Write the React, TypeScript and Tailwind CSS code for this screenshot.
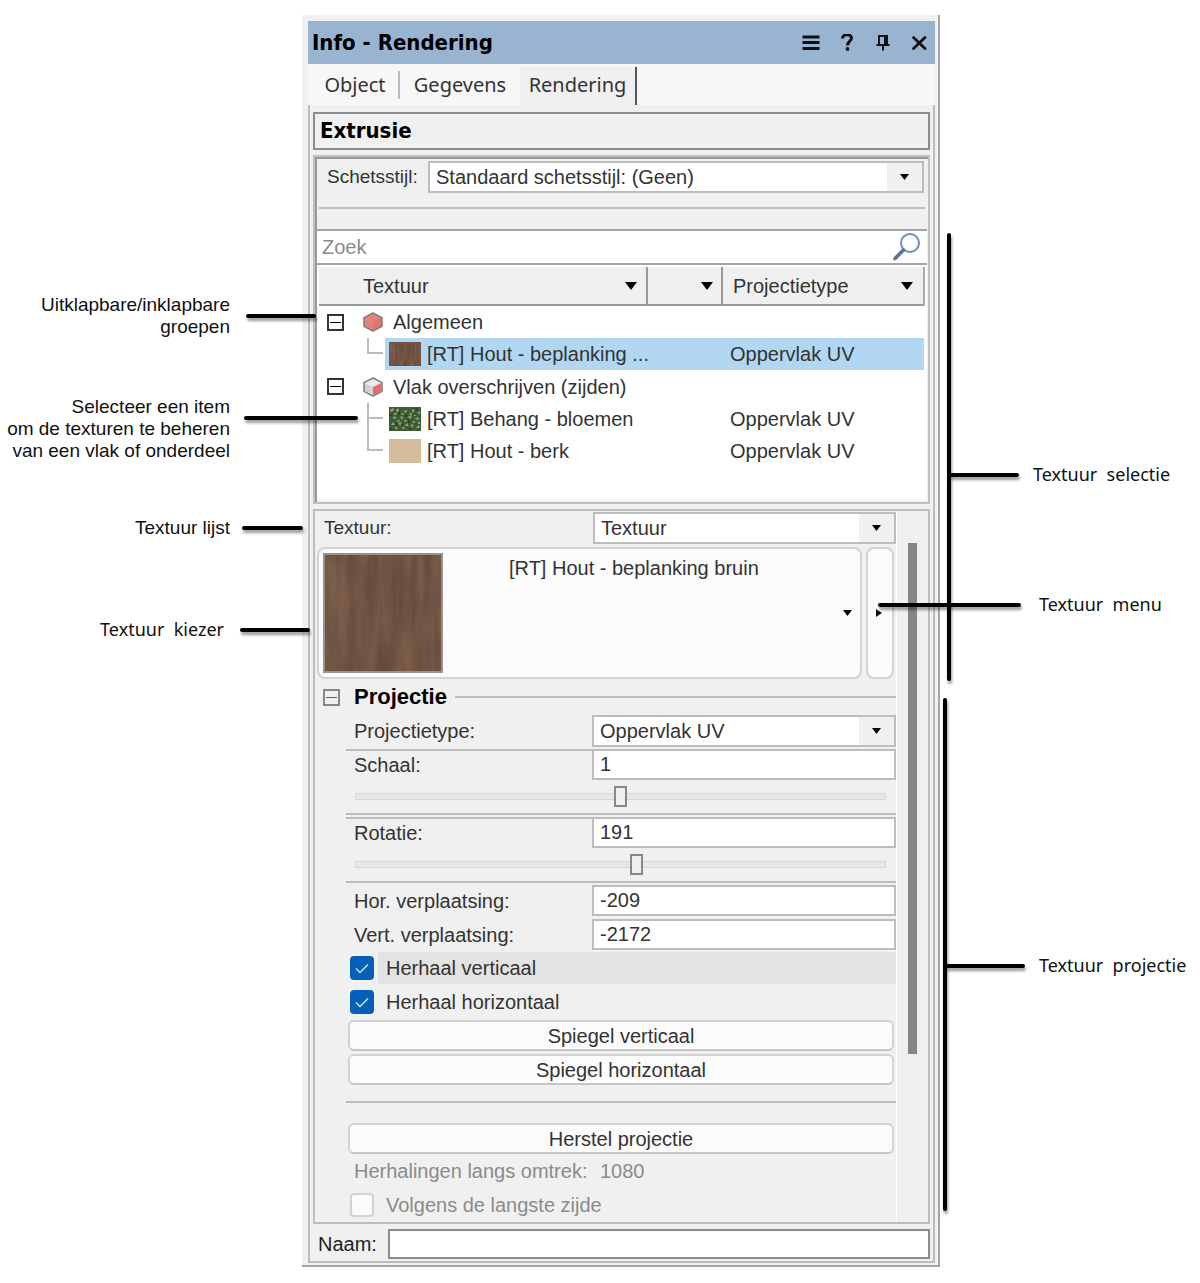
import { useState } from "react";
import type { ReactNode } from "react";

const surfaceOptions = ["Oppervlak UV", "Vlak", "Bol", "Cilinder"];

// Tree in the texture selection list
const textureGroups = [
  {
    name: "Algemeen",
    side: false,
    items: [{ name: "[RT] Hout - beplanking ...", swatch: "brown", selected: true }],
  },
  {
    name: "Vlak overschrijven (zijden)",
    side: true,
    items: [
      { name: "[RT] Behang - bloemen", swatch: "floral", selected: false },
      { name: "[RT] Hout - berk", swatch: "birch", selected: false },
    ],
  },
];

// Callouts left of the palette; the line is placed relative to its own text block
const leftCallouts = [
  {
    lines: ["Uitklapbare/inklapbare", "groepen"],
    block: "mt-[294px] pr-[72px]",
    line: "top-[20px] left-[246px] right-[-14px]",
  },
  {
    lines: ["Selecteer een item", "om de texturen te beheren", "van een vlak of onderdeel"],
    block: "mt-[58px] pr-[72px]",
    line: "top-[20px] left-[244px] right-[-56px]",
  },
  {
    lines: ["Textuur lijst"],
    block: "mt-[55px] pr-[72px]",
    line: "top-[9px] left-[242px] right-[-1px]",
  },
];

function BrownWood() {
  return (
    <svg className="block h-full w-full" viewBox="0 0 118 118" preserveAspectRatio="none" aria-hidden="true">
      <defs>
        <filter id="wood" x="0" y="0" width="100%" height="100%" colorInterpolationFilters="sRGB">
          <feTurbulence type="fractalNoise" baseFrequency="0.09 0.012" numOctaves="4" seed="8" />
          <feColorMatrix values="0.16 0 0 0 0.365  0.14 0 0 0 0.26  0.13 0 0 0 0.2  0 0 0 0 1" />
        </filter>
      </defs>
      <rect width="118" height="118" fill="#745645" />
      <rect width="118" height="118" filter="url(#wood)" />
    </svg>
  );
}

function Floral() {
  return (
    <svg className="block h-full w-full" viewBox="0 0 31 24" preserveAspectRatio="none" aria-hidden="true">
      <rect width="31" height="24" fill="#3d5c38" />
      <g fill="#8fa878">
        <path d="M1 3l3-2 1 2-3 2zM8 1l2 2-2 3-1-3zM14 4l4-1-2 3zM22 2l3 1-2 3zM27 6l3-2v3zM3 11l3-2 1 3zM11 9l3 1-2 3zM18 10l4-2-1 4zM25 12l3-2 1 3zM2 18l2-3 2 3zM9 16l3-1-1 4zM15 19l3-3 1 3zM21 17l3 1-2 3zM26 21l3-3 1 3z" />
      </g>
      <g fill="#b39a5e">
        <path d="M5 6h2v2H5zM12 6h2v2h-2zM20 6h2v2h-2zM8 13h2v2H8zM15 13h2v2h-2zM24 8h2v1h-2zM6 20h2v2H6zM13 20h2v2h-2zM23 14h2v2h-2zM28 15h2v2h-2z" />
      </g>
      <g fill="#1d3324">
        <path d="M0 7l3 1-2 2zM10 4l1 3-2 1zM17 7l1 2-3 1zM26 1l2 1-2 2zM6 16l2 1-2 2zM19 13l2 2-3 1zM12 17l2 1-2 1zM20 21l2 1-3 1zM2 21l2 1-3 1z" />
      </g>
    </svg>
  );
}

function Swatch({ kind }: { kind: string }) {
  return (
    <span className="block h-6 w-8 shrink-0 bg-[#d3bb9b]">
      {kind === "brown" && <BrownWood />}
      {kind === "floral" && <Floral />}
    </span>
  );
}

function CubeIcon({ side }: { side: boolean }) {
  return (
    <svg className="h-5 w-[22px] shrink-0" viewBox="0 0 22 20" aria-hidden="true">
      <path
        d="M11 1L20 5.6V14.4L11 19L2 14.4V5.6Z"
        fill={side ? "#ececec" : "#e47f7b"}
        stroke="#808080"
        strokeWidth="1.6"
        strokeLinejoin="round"
      />
      {side ? (
        <>
          <path d="M3 6.2L11 10V18L3 14Z" fill="#d3d3d3" />
          <path d="M19.2 6L11 10V18.2L19.2 14Z" fill="#e46a6c" />
        </>
      ) : (
        <path d="M19 6L11 10V18L19 14Z" fill="#d97570" />
      )}
    </svg>
  );
}

function Toggle({ label, dark = false }: { label: string; dark?: boolean }) {
  return (
    <button
      type="button"
      aria-label={label}
      className={`flex h-[17px] w-[17px] shrink-0 items-center justify-center border-2 ${
        dark ? "border-[#333] bg-white" : "border-[#888]"
      }`}
    >
      <span className={`h-px w-[11px] ${dark ? "bg-black" : "bg-[#666]"}`} />
    </button>
  );
}

function DownArrow({ className = "" }: { className?: string }) {
  return (
    <svg className={className} viewBox="0 0 12 8" aria-hidden="true">
      <path d="M0 0H12L6 8Z" fill="#000" />
    </svg>
  );
}

interface DropdownProps {
  id: string;
  options: string[];
  className?: string;
}

function Dropdown({ id, options, className = "" }: DropdownProps) {
  return (
    <div className={`relative h-8 border-2 border-[#bdbdbd] bg-white ${className}`}>
      <select id={id} className="h-full w-full appearance-none bg-transparent pr-9 pl-[6px] leading-6 outline-none">
        {options.map((option) => (
          <option key={option}>{option}</option>
        ))}
      </select>
      <span className="pointer-events-none absolute inset-y-0 right-0 flex w-[35px] items-center justify-center bg-[#f0f0f0]">
        <DownArrow className="h-[6px] w-[9px]" />
      </span>
    </div>
  );
}

function Field({ id, label, value, className = "" }: { id: string; label: string; value: string; className?: string }) {
  return (
    <div className={`flex items-center pl-2 ${className}`}>
      <label htmlFor={id} className="w-[238px] shrink-0">
        {label}
      </label>
      <input
        id={id}
        type="text"
        defaultValue={value}
        className="h-[31px] min-w-0 flex-1 border-2 border-[#bdbdbd] bg-white px-[6px] outline-none"
      />
    </div>
  );
}

function Slider({ label, max, value }: { label: string; max: number; value: number }) {
  return (
    <div className="flex h-[33px] items-center pr-[10px] pl-[9px]">
      <input
        type="range"
        aria-label={label}
        min={0}
        max={max}
        defaultValue={value}
        className="h-[7px] w-full appearance-none border border-[#d6d9d9] bg-[#e5e8e8] outline-none [&::-webkit-slider-thumb]:h-[21px] [&::-webkit-slider-thumb]:w-[13px] [&::-webkit-slider-thumb]:appearance-none [&::-webkit-slider-thumb]:border-2 [&::-webkit-slider-thumb]:border-[#888] [&::-webkit-slider-thumb]:bg-[#f0f0f0]"
      />
    </div>
  );
}

interface CheckRowProps {
  id: string;
  label: string;
  initial?: boolean;
  disabled?: boolean;
  highlighted?: boolean;
}

function CheckRow({ id, label, initial = false, disabled = false, highlighted = false }: CheckRowProps) {
  const [checked, setChecked] = useState(initial);

  return (
    <div className="flex h-[34px] items-center gap-1 pl-1">
      <span className="relative h-6 w-6 shrink-0">
        <input
          id={id}
          type="checkbox"
          checked={checked}
          disabled={disabled}
          onChange={(e) => setChecked(e.target.checked)}
          className="block h-6 w-6 appearance-none rounded border-2 border-[#d2d2d2] bg-[#fbfbfb] checked:border-[#0560b8] checked:bg-[#0560b8]"
        />
        {checked && (
          <svg className="pointer-events-none absolute inset-0" viewBox="0 0 24 24" aria-hidden="true">
            <path d="M6 12.5L10 16.5L18 8.5" fill="none" stroke="#cfe0f2" strokeWidth="1.5" />
          </svg>
        )}
      </span>
      <label
        htmlFor={id}
        className={`flex h-8 flex-1 items-center pl-2 ${highlighted ? "bg-[#e3e3e3]" : ""} ${
          disabled ? "text-[#8b8b8b]" : ""
        }`}
      >
        {label}
      </label>
    </div>
  );
}

function WideButton({ children }: { children: ReactNode }) {
  return (
    <button
      type="button"
      className="mx-[2px] block h-[31px] rounded-md border-2 border-[#d3d3d3] border-b-[#c6c6c6] bg-[#fbfbfb] leading-[26px]"
    >
      {children}
    </button>
  );
}

function TitleBar() {
  return (
    <header className="flex h-[43px] items-center bg-[#99b4d1] pr-[7px] pl-1">
      <h1 className="flex-1 font-['DejaVu_Sans_Condensed','DejaVu_Sans',sans-serif] text-[22px] font-bold text-black">
        Info - Rendering
      </h1>
      <div className="flex items-center gap-[18px]">
        <button type="button" aria-label="Menu">
          <svg className="h-[18px] w-[18px]" viewBox="0 0 18 18" aria-hidden="true">
            <path d="M0.5 3H17.5M0.5 8.5H17.5M0.5 14.5H17.5" stroke="#111" strokeWidth="2.8" />
          </svg>
        </button>
        <button type="button" aria-label="Help">
          <svg className="h-[18px] w-[18px]" viewBox="0 0 18 18" aria-hidden="true">
            <path
              d="M4.5 4.5C4.5 -0.5 13.5 -0.5 13.5 4C13.5 7.5 9.5 7.5 9.5 11.5"
              fill="none"
              stroke="#111"
              strokeWidth="3"
            />
            <circle cx="9.5" cy="15" r="1.9" fill="#111" />
          </svg>
        </button>
        <button type="button" aria-label="Vastzetten">
          <svg className="h-[18px] w-[18px]" viewBox="0 0 18 18" aria-hidden="true">
            <path d="M5 11V2H13V11M2.5 11H15.5M9 11V16.5" fill="none" stroke="#111" strokeWidth="2" />
            <path d="M10 2H13.5V11H10Z" fill="#111" />
          </svg>
        </button>
        <button type="button" aria-label="Sluiten">
          <svg className="h-[18px] w-[18px]" viewBox="0 0 18 18" aria-hidden="true">
            <path d="M3.5 3.5L15 14.5M15 3.5L3.5 14.5" stroke="#111" strokeWidth="2.8" strokeLinecap="round" />
          </svg>
        </button>
      </div>
    </header>
  );
}

function Tabs() {
  return (
    <div
      role="tablist"
      className="flex h-[41px] items-end bg-[#f7f7f7] font-['Noto_Sans','Open_Sans',sans-serif] text-xl text-[#333]"
    >
      <button type="button" role="tab" aria-selected={false} className="h-[38px] w-[90px] pb-[2px] pl-1">
        Object
      </button>
      <span className="mb-[6px] h-7 w-[2px] bg-[#bbb]" />
      <button type="button" role="tab" aria-selected={false} className="h-[38px] w-[120px] pb-[2px]">
        Gegevens
      </button>
      <button
        type="button"
        role="tab"
        aria-selected={true}
        className="h-[38px] w-[117px] border-r-2 border-[#555] bg-[#f0f0f0] pb-[2px]"
      >
        Rendering
      </button>
    </div>
  );
}

function TextureTable() {
  return (
    <table className="w-full table-fixed border-collapse text-left">
      <thead>
        <tr className="h-[38px] border-b-2 border-[#999] bg-[#f0f0f0]">
          <th scope="col" className="border-r-2 border-[#999] font-normal">
            <span className="flex items-center justify-between pr-[9px] pl-11">
              Textuur
              <DownArrow className="h-2 w-3" />
            </span>
          </th>
          <th scope="col" aria-label="Status" className="w-[75px] border-r-2 border-[#999] font-normal">
            <span className="flex justify-end pr-2">
              <DownArrow className="h-2 w-3" />
            </span>
          </th>
          <th scope="col" className="w-[202px] border-r-2 border-[#aaa] font-normal">
            <span className="flex items-center justify-between pr-[10px] pl-[10px]">
              Projectietype
              <DownArrow className="h-2 w-3" />
            </span>
          </th>
        </tr>
      </thead>
      <tbody>
        {textureGroups.map((group) => [
          <tr key={group.name} className="h-[33px]">
            <td colSpan={3} className="p-0">
              <div className="flex items-center pl-2">
                <Toggle label={group.name} dark />
                <span className="mr-[9px] ml-[18px] flex">
                  <CubeIcon side={group.side} />
                </span>
                {group.name}
              </div>
            </td>
          </tr>,
          ...group.items.map((item, idx) => (
            <tr key={item.name} className="h-8">
              <td className="p-0">
                <div className="flex h-8 pl-12">
                  <span className="w-[18px] shrink-0">
                    <span className="block h-4 w-4 border-b-2 border-l-2 border-[#bbb]" />
                    {idx < group.items.length - 1 && <span className="block h-4 border-l-2 border-[#bbb]" />}
                  </span>
                  <span
                    className={`flex flex-1 items-center gap-[6px] pl-1 whitespace-nowrap ${
                      item.selected ? "bg-[#b2d7f3]" : ""
                    }`}
                  >
                    <Swatch kind={item.swatch} />
                    {item.name}
                  </span>
                </div>
              </td>
              <td className={item.selected ? "bg-[#b2d7f3]" : ""} />
              <td className={`p-0 pl-2 ${item.selected ? "bg-[#b2d7f3]" : ""}`}>Oppervlak UV</td>
            </tr>
          )),
        ])}
      </tbody>
    </table>
  );
}

function TextureSelection() {
  return (
    <section className="mt-[5px] border-2 border-[#c0c0c0]">
      <div className="border-t-2 border-l-2 border-[#999] pr-px pb-[2px]">
        <div className="mx-[2px] flex items-center pt-[2px] pr-px pl-2">
          <label htmlFor="sketch" className="w-[101px] shrink-0 text-[19px]">
            Schetsstijl:
          </label>
          <Dropdown id="sketch" options={["Standaard schetsstijl: (Geen)"]} className="flex-1" />
        </div>
        <hr className="mx-[2px] mt-[14px] border-t-2 border-[#bdbdbd]" />
        <div className="mt-5 flex h-9 items-center border-y-2 border-[#a5a5a5] bg-white px-[5px]">
          <input
            type="search"
            aria-label="Zoek"
            placeholder="Zoek"
            className="min-w-0 flex-1 bg-transparent outline-none placeholder:text-[#8b8b8b]"
          />
          <svg className="h-[30px] w-[30px]" viewBox="0 0 30 30" aria-hidden="true">
            <circle cx="18" cy="11" r="9" fill="#fcfdff" stroke="#6f8db8" strokeWidth="2" />
            <path d="M11.5 18L3 26.5" stroke="#5473a3" strokeWidth="3.6" strokeLinecap="round" />
          </svg>
        </div>
        <div className="min-h-[235px] bg-white px-[2px] pt-[2px]">
          <TextureTable />
        </div>
      </div>
    </section>
  );
}

function TexturePicker() {
  return (
    <div className="mt-[3px] flex gap-1 pr-[2px]">
      <button
        type="button"
        className="flex h-[132px] flex-1 items-start rounded-lg border-2 border-[#d3d3d3] bg-[#fbfbfb] p-1 text-left"
      >
        <span className="h-[120px] w-[120px] shrink-0 border-2 border-[#9a918c]">
          <BrownWood />
        </span>
        <span className="mt-[3px] flex-1 pl-[66px] leading-6">[RT] Hout - beplanking bruin</span>
        <DownArrow className="mt-[57px] mr-1 h-[6px] w-[9px]" />
      </button>
      <button
        type="button"
        aria-label="Textuur menu"
        className="flex h-[132px] w-7 items-center rounded-lg border-2 border-[#d3d3d3] bg-[#fbfbfb] pl-2"
      >
        <svg className="h-2 w-[6px]" viewBox="0 0 6 8" aria-hidden="true">
          <path d="M0 0L6 4L0 8Z" fill="#111" />
        </svg>
      </button>
    </div>
  );
}

function PropertiesPane() {
  return (
    <section className="mt-[5px] flex border-2 border-[#bdbdbd]">
      <div className="flex-1 border-r border-white pt-px pl-[2px]">
        <div className="flex items-center pl-[7px]">
          <label htmlFor="texture" className="w-[269px] shrink-0 text-[19px]">
            Textuur:
          </label>
          <Dropdown id="texture" options={["Textuur", "Geen", "Volgens klasse"]} className="flex-1" />
        </div>
        <TexturePicker />

        <div className="flex h-9 items-center pl-[6px]">
          <Toggle label="Projectie" />
          <h2 className="mr-2 ml-[14px] text-[22px] font-bold text-black">Projectie</h2>
          <span className="h-[2px] flex-1 bg-[#bdbdbd]" />
        </div>

        <div className="pl-[29px]">
          <div className="flex items-center pl-2">
            <label htmlFor="projection" className="w-[238px] shrink-0">
              Projectietype:
            </label>
            <Dropdown id="projection" options={surfaceOptions} className="flex-1" />
          </div>
          <div className="mt-[2px] border-t-2 border-[#bdbdbd]">
            <Field id="scale" label="Schaal:" value="1" className="-mt-[2px]" />
            <Slider label="Schaal" max={100} value={50} />
          </div>
          <div className="border-t-2 border-[#bdbdbd] pt-[2px]">
            <div className="border-t-2 border-[#bdbdbd]">
              <Field id="rotation" label="Rotatie:" value="191" className="-mt-[2px]" />
              <Slider label="Rotatie" max={360} value={191} />
            </div>
          </div>
          <div className="mb-px flex flex-col gap-[3px] border-t-2 border-[#bdbdbd] pt-[2px]">
            <Field id="offset-h" label="Hor. verplaatsing:" value="-209" />
            <Field id="offset-v" label="Vert. verplaatsing:" value="-2172" />
          </div>
          <CheckRow id="repeat-v" label="Herhaal verticaal" initial highlighted />
          <CheckRow id="repeat-h" label="Herhaal horizontaal" initial />
          <div className="mt-px flex flex-col gap-[3px]">
            <WideButton>Spiegel verticaal</WideButton>
            <WideButton>Spiegel horizontaal</WideButton>
          </div>
          <hr className="mt-4 mb-5 border-t-2 border-[#bdbdbd]" />
          <div className="flex flex-col">
            <WideButton>Herstel projectie</WideButton>
          </div>
          <div className="flex h-[34px] items-center pl-2 text-[#8b8b8b]">
            <span className="w-[246px]">Herhalingen langs omtrek:</span>
            <span>1080</span>
          </div>
          <CheckRow id="longest" label="Volgens de langste zijde" disabled />
        </div>
      </div>
      <div className="w-[31px] shrink-0 pt-8 pl-[11px]">
        <div className="h-[511px] w-[9px] bg-[#868686]" />
      </div>
    </section>
  );
}

function Palette() {
  return (
    <div className="mt-[15px] self-start border-r-2 border-b-2 border-[#a5a5a5] bg-[#f0f0f0] pt-[6px] pr-[3px] pb-[2px] pl-[6px] text-xl leading-7 text-[#333]">
      <TitleBar />
      <Tabs />
      <div className="border-x-2 border-b-2 border-[#bdbdbd] px-[3px] pt-[7px] pb-[2px]">
        <div className="flex h-[38px] items-center border-2 border-[#8c8c8c] pl-[5px]">
          <h2 className="font-['DejaVu_Sans_Condensed','DejaVu_Sans',sans-serif] text-[22px] font-bold text-black">
            Extrusie
          </h2>
        </div>
        <TextureSelection />
        <PropertiesPane />
        <div className="mt-[5px] flex items-center pl-[5px]">
          <label htmlFor="name" className="w-[70px] shrink-0 text-[#222]">
            Naam:
          </label>
          <input
            id="name"
            type="text"
            className="h-[30px] min-w-0 flex-1 border-2 border-[#8c8c8c] bg-white px-1 outline-none"
          />
        </div>
      </div>
    </div>
  );
}

function Leader({ className }: { className: string }) {
  return <span aria-hidden="true" className={`absolute z-10 rounded-full bg-black shadow-[1px_3px_3px_#0006] ${className}`} />;
}

export default function App() {
  return (
    <main className="grid min-h-screen grid-cols-[302px_minmax(0,1fr)_260px] bg-white font-['Liberation_Sans',Arial,sans-serif]">
      <aside className="text-right text-[19px] leading-[22px] text-[#111]">
        {leftCallouts.map((callout) => (
          <div key={callout.lines[0]} className={`relative ${callout.block}`}>
            {callout.lines.map((line) => (
              <p key={line} className="whitespace-nowrap">
                {line}
              </p>
            ))}
            <Leader className={`h-1 ${callout.line}`} />
          </div>
        ))}
        <p className="relative mt-[79px] pr-[78px] font-['Noto_Sans','Open_Sans',sans-serif] text-lg leading-[22px]">
          Textuur&nbsp; kiezer
          <Leader className="top-[10px] right-[-8px] left-[240px] h-1" />
        </p>
      </aside>

      <Palette />

      <aside className="font-['Noto_Sans','Open_Sans',sans-serif] text-lg leading-[22px] whitespace-nowrap text-[#111]">
        <div className="relative mt-[233px] h-[448px] pt-[230px]">
          <Leader className="inset-y-0 left-[7px] w-1" />
          <p className="relative pl-[93px]">
            Textuur&nbsp; selectie
            <Leader className="top-[10px] left-[9px] h-1 w-[70px]" />
          </p>
          <p className="relative mt-[108px] pl-[99px]">
            Textuur&nbsp; menu
            <Leader className="top-[10px] left-[-62px] h-1 w-[143px]" />
          </p>
        </div>
        <div className="relative mt-[17px] h-[513px] pt-[256px]">
          <Leader className="inset-y-0 left-[3px] w-1" />
          <p className="relative pl-[99px]">
            Textuur&nbsp; projectie
            <Leader className="top-[10px] left-[5px] h-1 w-20" />
          </p>
        </div>
      </aside>
    </main>
  );
}
